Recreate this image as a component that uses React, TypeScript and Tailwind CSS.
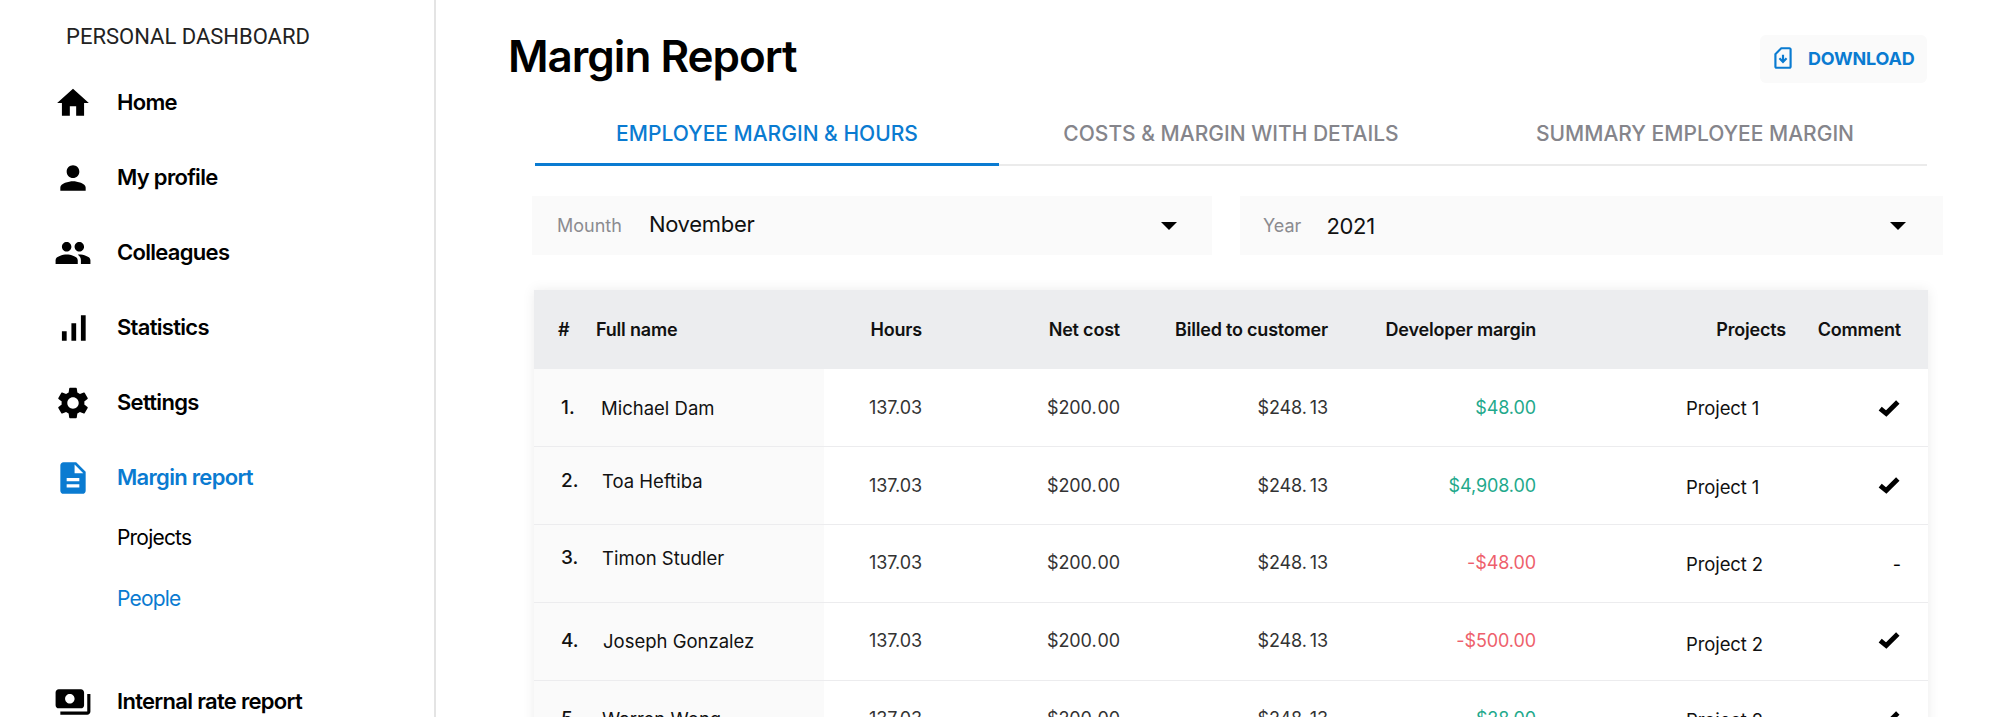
import { MdDescription, MdHome, MdPayments, MdPeople, MdPerson, MdSettings, MdSignalCellularAlt } from "react-icons/md";
import type { IconType } from "react-icons";

const nav: { label: string; icon: IconType; active?: boolean }[] = [
	{ label: "Home", icon: MdHome },
	{ label: "My profile", icon: MdPerson },
	{ label: "Colleagues", icon: MdPeople },
	{ label: "Statistics", icon: MdSignalCellularAlt },
	{ label: "Settings", icon: MdSettings },
	{ label: "Margin report", icon: MdDescription, active: true },
];

const tabs = ["EMPLOYEE MARGIN & HOURS", "COSTS & MARGIN WITH DETAILS", "SUMMARY EMPLOYEE MARGIN"];

type Row = {
	n: string;
	name: string;
	margin: string;
	marginClass: string;
	project: string;
	check: boolean;
	nameClass: string;
	offsetClass: string;
	valueClass: string;
	projectClass: string;
	checkClass: string;
};

const rows: Row[] = [
	{ n: "1.", name: "Michael Dam", margin: "$48.00", marginClass: "text-[#1fa98c]", project: "Project 1", check: true, nameClass: "pl-[27px]", offsetClass: "pt-[2px]", valueClass: "", projectClass: "pt-[2px]", checkClass: "" },
	{ n: "2.", name: "Toa Heftiba", margin: "$4,908.00", marginClass: "text-[#1fa98c]", project: "Project 1", check: true, nameClass: "pl-[28px]", offsetClass: "pb-[8px]", valueClass: "", projectClass: "pt-[4px]", checkClass: "pb-[2px]" },
	{ n: "3.", name: "Timon Studler", margin: "-$48.00", marginClass: "text-[#ee5f6c]", project: "Project 2", check: false, nameClass: "pl-[28px]", offsetClass: "pb-[10px]", valueClass: "pb-[2px]", projectClass: "pt-[2px]", checkClass: "pt-[2px]" },
	{ n: "4.", name: "Joseph Gonzalez", margin: "-$500.00", marginClass: "text-[#ee5f6c]", project: "Project 2", check: true, nameClass: "pl-[29px]", offsetClass: "", valueClass: "pb-[2px]", projectClass: "pt-[7px]", checkClass: "pb-[4px]" },
	{ n: "5.", name: "Warren Wong", margin: "$28.00", marginClass: "text-[#1fa98c]", project: "Project 2", check: true, nameClass: "pl-[28px]", offsetClass: "", valueClass: "pb-[2px]", projectClass: "pt-[2px]", checkClass: "pb-[2px]" },
];

const Check = () => (
	<svg viewBox="0 0 20 16" className="mr-[1px] h-[18px] w-[22px]">
		<path d="M2 8.5 7.5 13 18 2.5" fill="none" stroke="black" strokeWidth="4.4" />
	</svg>
);

// the cents sit a little apart from the dot in these columns
const Amount = ({ whole, cents, gap }: { whole: string; cents: string; gap: string }) => (
	<>
		<span className={gap}>{whole}.</span>
		{cents}
	</>
);

const Select = ({ label, value, className, valueClass }: { label: string; value: string; className: string; valueClass: string }) => (
	<div className={`flex h-[59px] items-center bg-[#fafafa] ${className}`}>
		<span className="text-[18px] text-[#8b8b90]">{label}</span>
		<span className={`text-[22px] tracking-[-0.3px] text-[#111] ${valueClass}`}>{value}</span>
		<span className="ml-auto h-0 w-0 border-x-[8px] border-t-[8px] border-x-transparent border-t-black" />
	</div>
);

export default function App() {
	return (
		<div className="flex h-[717px] w-[2000px] overflow-hidden bg-white font-['Inter',sans-serif] text-black">
			<aside className="h-full w-[436px] shrink-0 overflow-hidden border-r-2 border-[#e4e4e4]">
				<div className="pl-[66px] pt-[23px] font-['Roboto',sans-serif] text-[22px] leading-[28px] text-[#222]">PERSONAL DASHBOARD</div>
				<nav className="pt-[14px]">
					{nav.map(({ label, icon: Icon, active }) => (
						<div key={label} className={`flex h-[75px] items-center ${active ? "text-[#0a7bd1]" : "text-black"}`}>
							<div className="flex w-[117px] justify-center pl-[29px]">
								<Icon size={38} />
							</div>
							<span className="text-[22px] font-semibold tracking-[-0.7px]">{label}</span>
						</div>
					))}
				</nav>
				<div className="-mt-[9px] pl-[117px] text-[21px] tracking-[-0.8px]">
					<div className="flex h-[61px] items-center pt-[2px]">Projects</div>
					<div className="flex h-[62px] items-center pt-[1px] text-[#0a7bd1]">People</div>
				</div>
				<div className="mt-[35px] flex h-[75px] items-center">
					<div className="flex w-[117px] justify-center pl-[29px]">
						<MdPayments size={38} />
					</div>
					<span className="text-[22px] font-semibold tracking-[-0.7px]">Internal rate report</span>
				</div>
			</aside>

			<main className="min-w-0 flex-1 pl-[72px] pt-[30px]">
				<div className="flex items-start justify-between pr-[73px]">
					<h1 className="text-[44px] font-semibold leading-[52px] tracking-[-1px]">Margin Report</h1>
					<button className="mt-[5px] flex h-[48px] w-[167px] items-center rounded-[6px] bg-[#fafafa] pb-[2px] pl-[10px] text-[18px] font-bold tracking-[-0.2px] text-[#0a7bd1]">
						<svg viewBox="0 0 24 24" className="mr-[12px] h-[26px] w-[26px] fill-current">
							<path d="M18 2h-8L4 8v12c0 1.1.9 2 2 2h12c1.1 0 2-.9 2-2V4c0-1.1-.9-2-2-2zm0 2v16H6V8.83L10.83 4H18z" />
							<path d="M16 13l-4 4-4-4 1.41-1.41L11 13.17V9.02L13 9v4.17l1.59-1.58L16 13z" />
						</svg>
						DOWNLOAD
					</button>
				</div>

				<div className="ml-[27px] mr-[73px] mt-[21px] flex h-[62px] border-b-2 border-[#ebebeb]">
					{tabs.map((tab, i) => (
						<div key={tab} className={`-mb-[2px] flex flex-1 items-center justify-center border-b-[3px] text-[21px] font-medium ${i === 0 ? "border-[#0a7bd1] text-[#0a7bd1]" : "border-transparent text-[#85858b]"}`}>
							{tab}
						</div>
					))}
				</div>

				<div className="ml-[24px] mr-[57px] mt-[30px] flex gap-[28px]">
					<Select label="Mounth" value="November" className="w-[680px] pl-[25px] pr-[35px]" valueClass="ml-[27px] pb-[2px]" />
					<Select label="Year" value="2021" className="flex-1 pl-[23px] pr-[37px]" valueClass="ml-[25px] pt-[2px]" />
				</div>

				<div className="ml-[26px] mr-[72px] mt-[35px] shadow-[0_0_12px_rgba(0,0,0,0.08)]">
					<div className="flex h-[79px] items-center bg-[#ecedef] text-[18px] font-semibold tracking-[-0.2px] text-[#111]">
						<span className="w-[62px] pl-[24px]">#</span>
						<span className="w-[228px]">Full name</span>
						<span className="w-[98px] text-right">Hours</span>
						<span className="w-[198px] text-right">Net cost</span>
						<span className="w-[208px] text-right">Billed to customer</span>
						<span className="w-[208px] text-right">Developer margin</span>
						<span className="w-[250px] text-right">Projects</span>
						<span className="w-[115px] text-right">Comment</span>
					</div>
					{rows.map((row) => (
						<div key={row.n} className="flex h-[78px] items-center border-b border-[#ececee] bg-white text-[18px] tracking-[-0.1px]">
							<div className={`flex h-full w-[290px] items-center bg-[#fafafa] pl-[27px] text-[18.5px] tracking-normal text-[#111] ${row.offsetClass}`}>
								<span className="w-[13px] text-[19px] font-medium">{row.n}</span>
								<span className={`${row.nameClass} whitespace-nowrap`}>{row.name}</span>
							</div>
							<span className={`w-[98px] text-right text-[#333] ${row.valueClass}`}>137.03</span>
							<span className={`w-[198px] text-right text-[#333] ${row.valueClass}`}><Amount whole="$200" cents="00" gap="mr-[1px]" /></span>
							<span className={`w-[208px] text-right text-[#333] ${row.valueClass}`}><Amount whole="$248" cents="13" gap="mr-[3px]" /></span>
							<span className={`w-[208px] text-right ${row.marginClass} ${row.valueClass}`}>{row.margin}</span>
							<span className={`w-[250px] whitespace-nowrap pl-[150px] text-[18.5px] text-[#111] ${row.projectClass}`}>{row.project}</span>
							<div className={`flex w-[115px] justify-end ${row.checkClass}`}>
								{row.check ? <Check /> : <span className="text-[18px]">-</span>}
							</div>
						</div>
					))}
				</div>
			</main>
		</div>
	);
}
